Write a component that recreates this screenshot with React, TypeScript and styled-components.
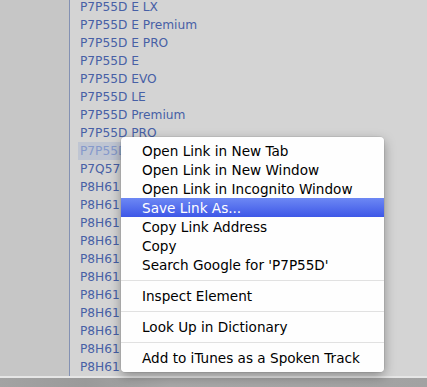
import React from "react";
import styled, { createGlobalStyle } from "styled-components";

const Global = createGlobalStyle`
  html, body { margin: 0; padding: 0; overflow: hidden; }
  body { width: 427px; height: 387px; background: #d4d4d4; }
`;

const Page = styled.div`
  position: relative;
  width: 427px;
  height: 387px;
  display: flex;
  flex-direction: column;
  overflow: hidden;
  font-family: "DejaVu Sans", "Liberation Sans", sans-serif;
`;

const Main = styled.div`
  display: flex;
  height: 376px;
  overflow: hidden;
`;

const Gutter = styled.div`
  width: 69px;
  background: #c6c6c6;
`;

const Divider = styled.div`
  width: 1px;
  background: #8391b3;
`;

const List = styled.div`
  flex: 1;
  background: #d4d4d4;
  display: flex;
  flex-direction: column;
  margin-top: -2px;
  padding-left: 8px;
`;

const Row = styled.div<{ $active?: boolean }>`
  height: 18px;
  line-height: 18px;
  font-size: 12.2px;
  color: ${(p) => (p.$active ? "#8599cb" : "#4760a6")};
  white-space: nowrap;
  padding-left: 2px;
  width: ${(p) => (p.$active ? "41px" : "auto")};
  background: ${(p) => (p.$active ? "#bfc5d2" : "transparent")};
`;

const BottomBar = styled.div`
  flex: 1;
  border-top: 2px solid #e6e6e6;
  background: linear-gradient(90deg, #a3a3a3 0%, #9a9a9a 20%, #a8a8a8 40%, #a2a2a2 100%);
`;

const Menu = styled.div`
  position: absolute;
  left: 121px;
  top: 137px;
  width: 263px;
  padding: 4px 0 5px;
  background: rgba(255, 255, 255, 0.98);
  border-radius: 4px;
  box-shadow: 0 4px 12px rgba(0, 0, 0, 0.35), 0 0 0 0.5px rgba(0, 0, 0, 0.12);
  display: flex;
  flex-direction: column;
`;

const Item = styled.div<{ $active?: boolean }>`
  height: 19px;
  line-height: 20px;
  padding-left: 21px;
  font-size: 13.6px;
  white-space: nowrap;
  color: ${(p) => (p.$active ? "#ffffff" : "#000000")};
  background: ${(p) =>
    p.$active ? "linear-gradient(#6d88f4, #3d57e7)" : "transparent"};
`;

const Separator = styled.div`
  height: 1px;
  margin: 6px 0 5px;
  background: #e1e1e1;
`;

const rows: string[] = [
  "P7P55D E LX",
  "P7P55D E Premium",
  "P7P55D E PRO",
  "P7P55D E",
  "P7P55D EVO",
  "P7P55D LE",
  "P7P55D Premium",
  "P7P55D PRO",
  "P7P55D",
  "P7Q57",
  "P8H61",
  "P8H61",
  "P8H61",
  "P8H61",
  "P8H61",
  "P8H61",
  "P8H61",
  "P8H61",
  "P8H61",
  "P8H61",
  "P8H61",
];

export default function App() {
  return (
    <>
      <Global />
      <Page>
        <Main>
          <Gutter />
          <Divider />
          <List>
            {rows.map((r, i) => (
              <Row key={i} $active={i === 8}>
                {r}
              </Row>
            ))}
          </List>
        </Main>
        <BottomBar />
        <Menu>
          <Item>Open Link in New Tab</Item>
          <Item>Open Link in New Window</Item>
          <Item>Open Link in Incognito Window</Item>
          <Item $active>Save Link As...</Item>
          <Item>Copy Link Address</Item>
          <Item>Copy</Item>
          <Item>Search Google for 'P7P55D'</Item>
          <Separator />
          <Item>Inspect Element</Item>
          <Separator />
          <Item>Look Up in Dictionary</Item>
          <Separator />
          <Item>Add to iTunes as a Spoken Track</Item>
        </Menu>
      </Page>
    </>
  );
}
